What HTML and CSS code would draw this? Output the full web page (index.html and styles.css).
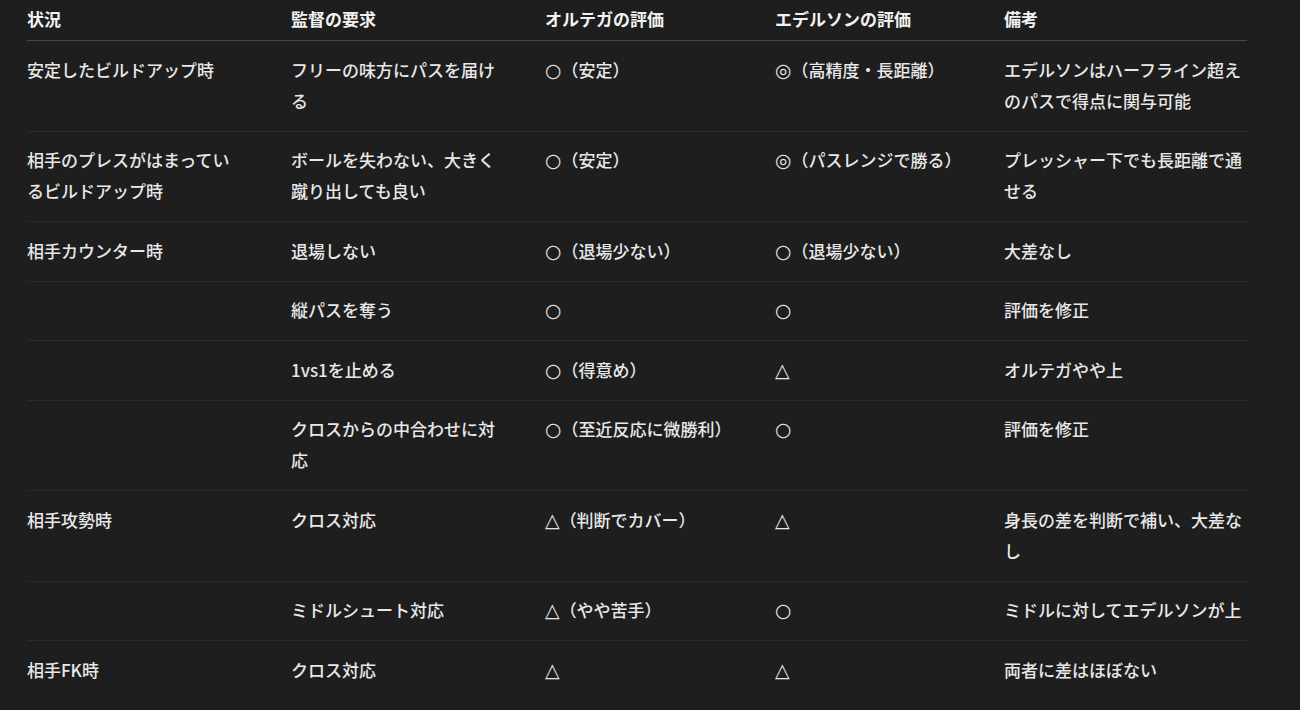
FILE: index.html
```html
<!DOCTYPE html>
<html lang="ja">
<head>
<meta charset="utf-8">
<title>GK比較表</title>
<link rel="stylesheet" href="styles.css">
</head>
<body>
<div class="wrap">
<table class="cmp">
  <colgroup>
    <col class="c1"><col class="c2"><col class="c3"><col class="c4"><col class="c5">
  </colgroup>
  <thead>
    <tr>
      <th>状況</th>
      <th>監督の要求</th>
      <th>オルテガの評価</th>
      <th>エデルソンの評価</th>
      <th>備考</th>
    </tr>
  </thead>
  <tbody>
    <tr>
      <td>安定したビルドアップ時</td>
      <td>フリーの味方にパスを届ける</td>
      <td class="ev"><span class="mk">○</span>（安定）</td>
      <td class="ev"><span class="mk">◎</span>（高精度・長距離）</td>
      <td>エデルソンはハーフライン超えのパスで得点に関与可能</td>
    </tr>
    <tr>
      <td>相手のプレスがはまっているビルドアップ時</td>
      <td>ボールを失わない、大きく蹴り出しても良い</td>
      <td class="ev"><span class="mk">○</span>（安定）</td>
      <td class="ev"><span class="mk">◎</span>（パスレンジで勝る）</td>
      <td>プレッシャー下でも長距離で通せる</td>
    </tr>
    <tr>
      <td>相手カウンター時</td>
      <td>退場しない</td>
      <td class="ev"><span class="mk">○</span>（退場少ない）</td>
      <td class="ev"><span class="mk">○</span>（退場少ない）</td>
      <td>大差なし</td>
    </tr>
    <tr>
      <td></td>
      <td>縦パスを奪う</td>
      <td class="ev"><span class="mk">○</span></td>
      <td class="ev"><span class="mk">○</span></td>
      <td>評価を修正</td>
    </tr>
    <tr>
      <td></td>
      <td>1vs1を止める</td>
      <td class="ev"><span class="mk">○</span>（得意め）</td>
      <td class="ev"><span class="mk">△</span></td>
      <td>オルテガやや上</td>
    </tr>
    <tr>
      <td></td>
      <td>クロスからの中合わせに対応</td>
      <td class="ev"><span class="mk">○</span>（至近反応に微勝利）</td>
      <td class="ev"><span class="mk">○</span></td>
      <td>評価を修正</td>
    </tr>
    <tr>
      <td>相手攻勢時</td>
      <td>クロス対応</td>
      <td class="ev"><span class="mk">△</span>（判断でカバー）</td>
      <td class="ev"><span class="mk">△</span></td>
      <td>身長の差を判断で補い、大差なし</td>
    </tr>
    <tr>
      <td></td>
      <td>ミドルシュート対応</td>
      <td class="ev"><span class="mk">△</span>（やや苦手）</td>
      <td class="ev"><span class="mk">○</span></td>
      <td>ミドルに対してエデルソンが上</td>
    </tr>
    <tr>
      <td>相手FK時</td>
      <td>クロス対応</td>
      <td class="ev"><span class="mk">△</span></td>
      <td class="ev"><span class="mk">△</span></td>
      <td>両者に差はほぼない</td>
    </tr>
  </tbody>
</table>
</div>
</body>
</html>
```
FILE: styles.css
```css
html, body {
  margin: 0;
  padding: 0;
  background: #1e1e1e;
}

body {
  color: #e8e8e8;
  font-family: "Noto Sans CJK JP", "Noto Sans", sans-serif;
  font-size: 17px;
  line-height: 31px;
  font-weight: 500;
}

.wrap {
  padding: 2.5px 0 0 27px;
}

.cmp {
  width: 1220px;
  border-collapse: collapse;
  table-layout: fixed;
}

.c1 { width: 264px; }
.c2 { width: 254px; }
.c3 { width: 230px; }
.c4 { width: 229px; }
.c5 { width: 243px; }

.cmp th {
  text-align: left;
  font-weight: 700;
  color: #f2f2f2;
  padding: 0 45px 6.5px 0;
  border-bottom: 1px solid #474747;
  vertical-align: top;
}

.cmp td {
  padding: 12.5px 45px 15px 0;
  vertical-align: top;
  border-bottom: 1px solid #2c2c2c;
}

.cmp td.ev {
  white-space: nowrap;
  padding-right: 20px;
}

.cmp th:last-child,
.cmp td:last-child {
  padding-right: 0;
}

.cmp tbody tr:last-child td {
  border-bottom: none;
}

.mk {
  font-family: "DejaVu Sans", sans-serif;
  font-size: 19px;
  font-weight: 700;
  line-height: 0;
}
```
